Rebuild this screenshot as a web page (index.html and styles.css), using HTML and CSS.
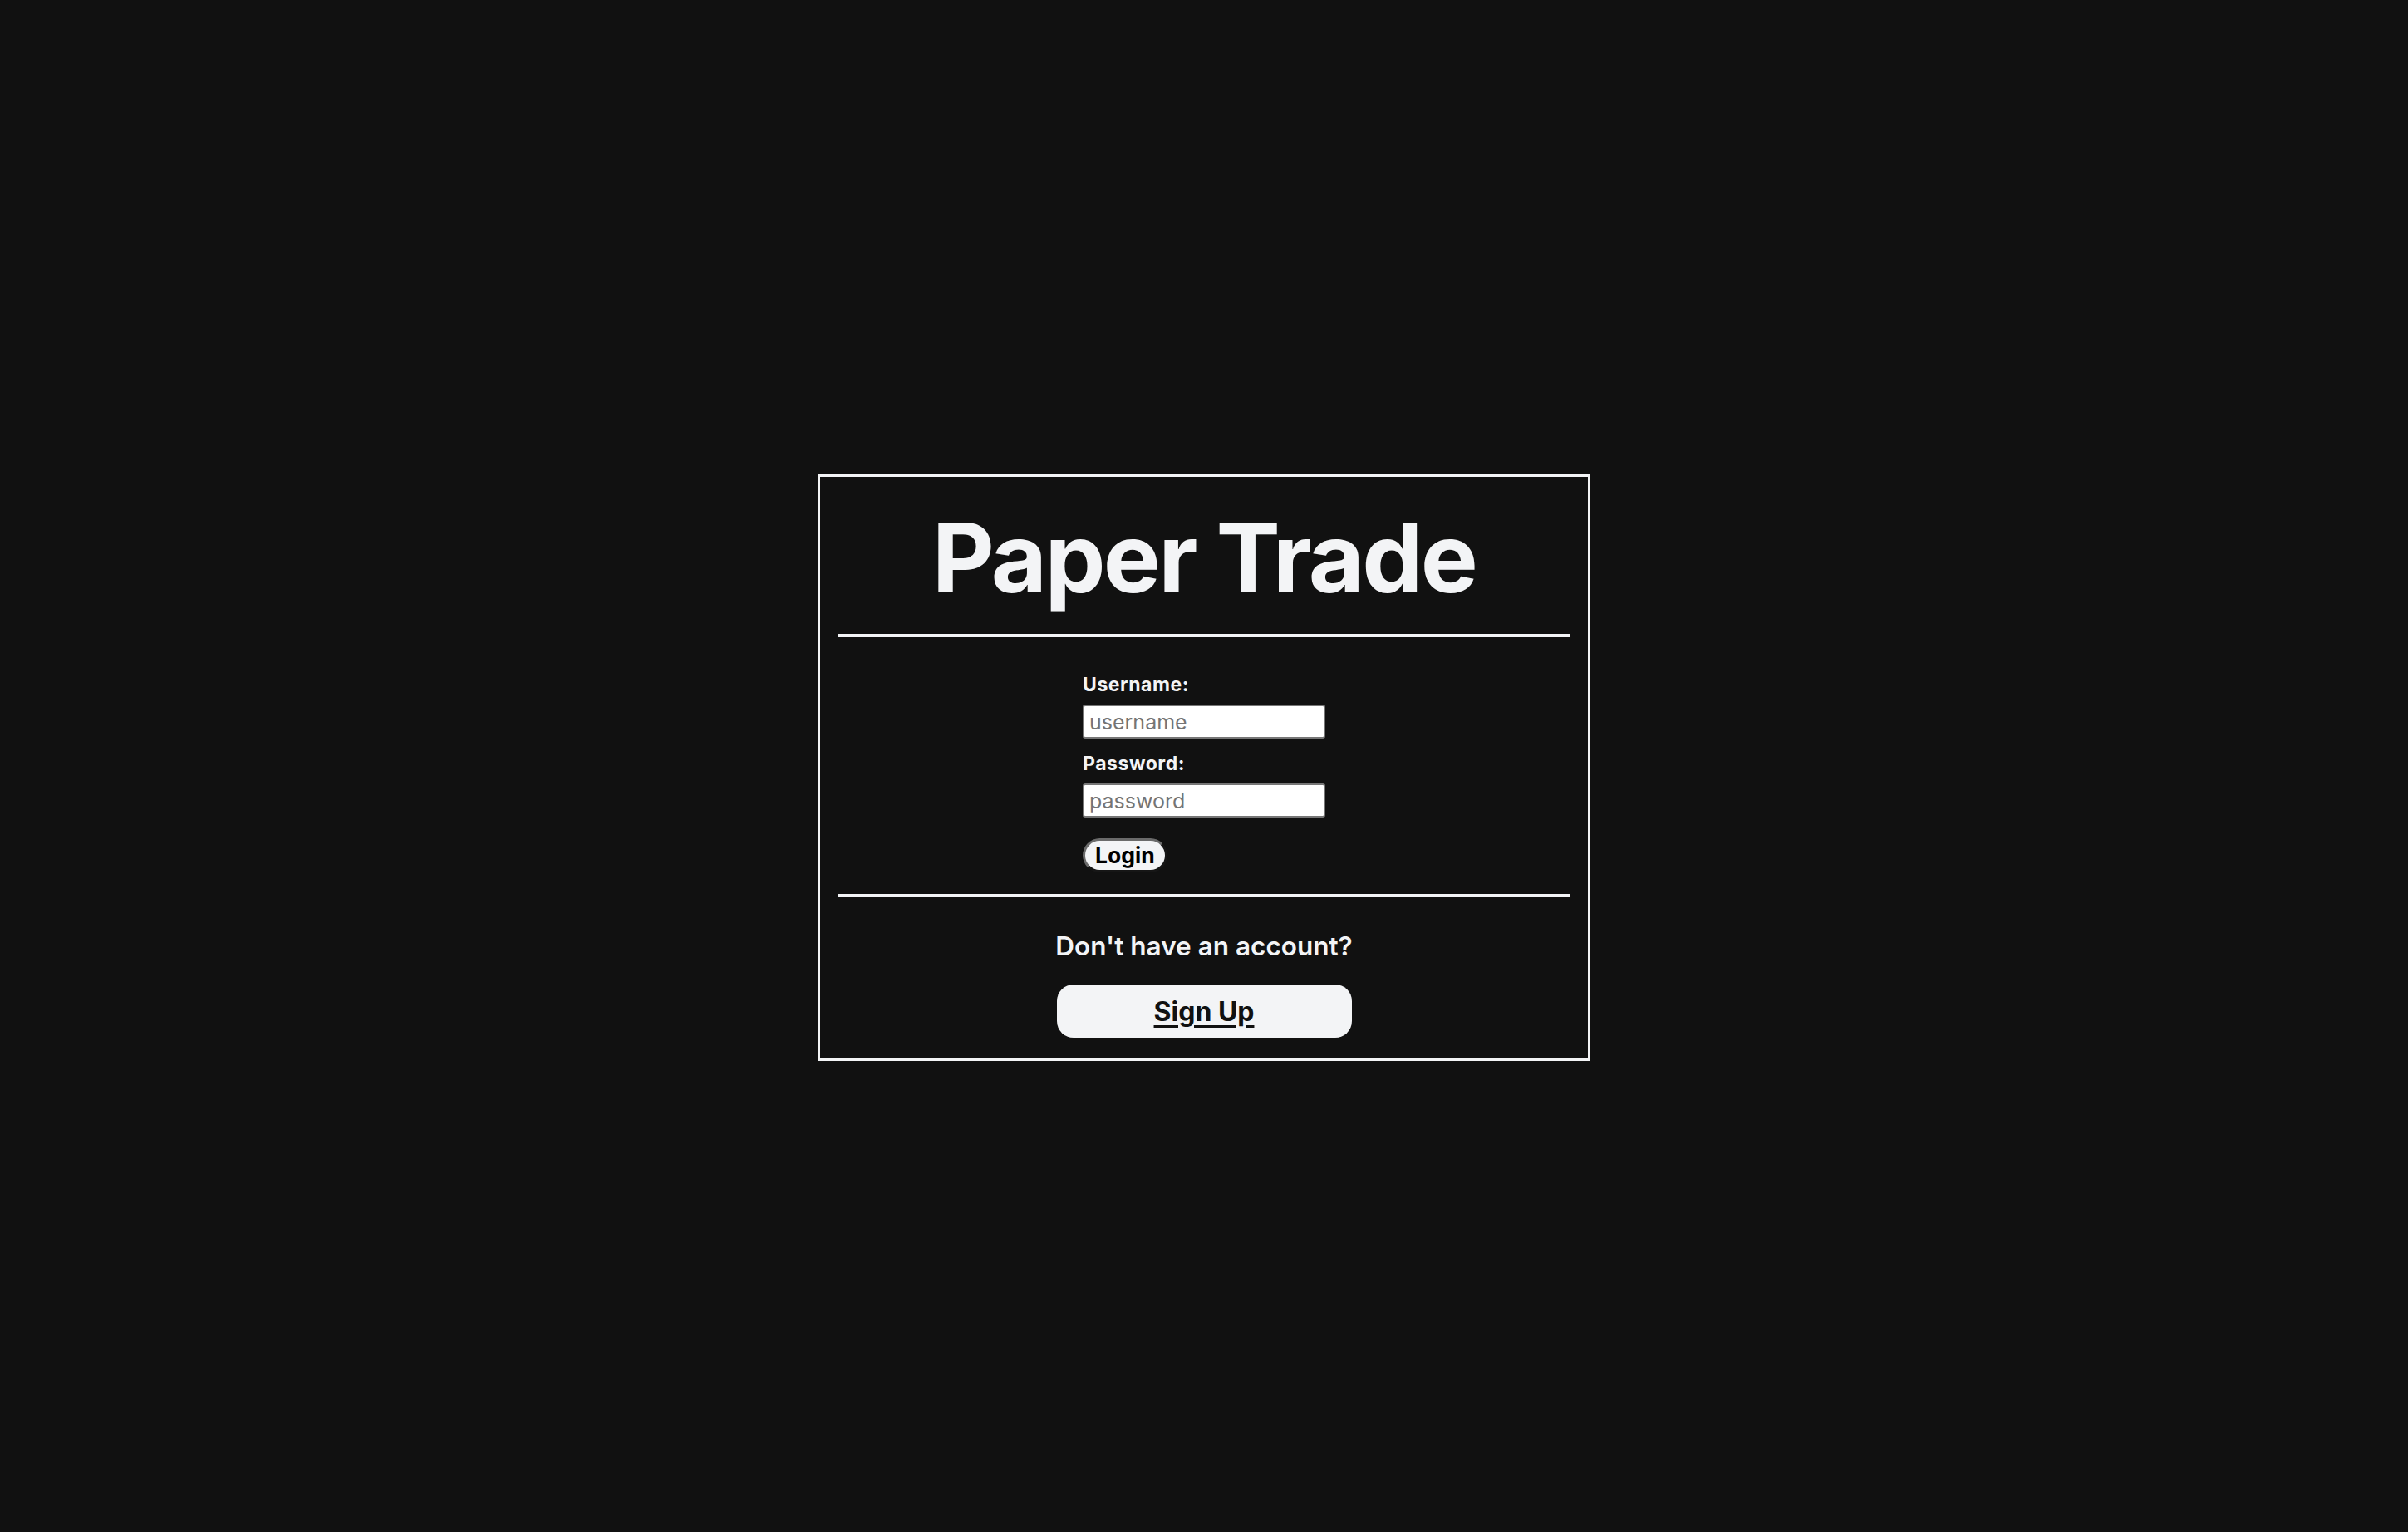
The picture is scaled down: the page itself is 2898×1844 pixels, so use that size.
FILE: index.html
```html
<!DOCTYPE html>
<html lang="en">
<head>
<meta charset="utf-8">
<title>Paper Trade</title>
<link rel="stylesheet" href="styles.css">
</head>
<body>
<main class="page">
  <section class="card">
    <h1 class="title">Paper Trade</h1>
    <hr class="rule rule-top">
    <form class="login-form">
      <label class="field-label" for="username">Username:</label>
      <input class="field-input" id="username" type="text" placeholder="username">
      <label class="field-label" for="password">Password:</label>
      <input class="field-input field-input-last" id="password" type="password" placeholder="password">
      <button class="login-btn" type="button">Login</button>
    </form>
    <hr class="rule">
    <p class="signup-prompt">Don't have an account?</p>
    <a class="signup-btn" href="#">Sign Up</a>
  </section>
</main>
</body>
</html>
```

FILE: styles.css
```css
* { box-sizing: border-box; }
html, body {
  margin: 0;
  padding: 0;
  background: #111111;
  color: #f3f4f6;
  font-family: Inter, "Noto Sans", sans-serif;
}
.page {
  width: 100vw;
  height: 100vh;
  padding-top: 4px;
  display: flex;
  align-items: center;
  justify-content: center;
}
.card {
  width: 930px;
  border: 3px solid #f3f4f6;
  padding: 0 22px 25px;
  display: flex;
  flex-direction: column;
  align-items: center;
}
.title {
  margin: 39px 0 0;
  font-size: 116px;
  line-height: 1;
  font-weight: 700;
  letter-spacing: -2.7px;
  color: #f3f4f6;
}
.rule {
  width: 100%;
  margin: 0;
  border: none;
  height: 4px;
  background: #f3f4f6;
}
.rule-top { margin-top: 34px; }
.login-form {
  width: 292px;
  display: flex;
  flex-direction: column;
  align-items: flex-start;
  padding-top: 44px;
  padding-bottom: 26px;
}
.field-label {
  font-size: 23px;
  line-height: 26px;
  font-weight: 700;
  letter-spacing: 0.55px;
  color: #f3f4f6;
}
.field-input {
  margin-top: 11px;
  margin-bottom: 17px;
  width: 292px;
  height: 41px;
  border: 2px solid #767676;
  border-radius: 3px;
  background: #ffffff;
  padding: 0 6px;
  font-family: Inter, sans-serif;
  font-size: 25px;
  color: #111;
}
.field-input::placeholder { color: #757575; }
.field-input-last { margin-bottom: 25px; }
.login-btn {
  height: 41px;
  padding: 0 12px;
  border: 3px outset #6b6b6b;
  border-radius: 999px;
  background: #f3f4f6;
  color: #000;
  font-family: Inter, sans-serif;
  font-weight: 700;
  font-size: 26.5px;
  line-height: 1;
}
.signup-prompt {
  margin: 40px 0 0;
  font-size: 31.5px;
  line-height: 38px;
  font-weight: 600;
}
.signup-btn {
  margin-top: 27px;
  width: 355px;
  height: 64px;
  border-radius: 20px;
  background: #f3f4f6;
  color: #111;
  font-size: 32px;
  font-weight: 700;
  text-decoration: underline;
  text-decoration-thickness: 3px;
  text-underline-offset: 5px;
  display: flex;
  align-items: center;
  justify-content: center;
}
```
